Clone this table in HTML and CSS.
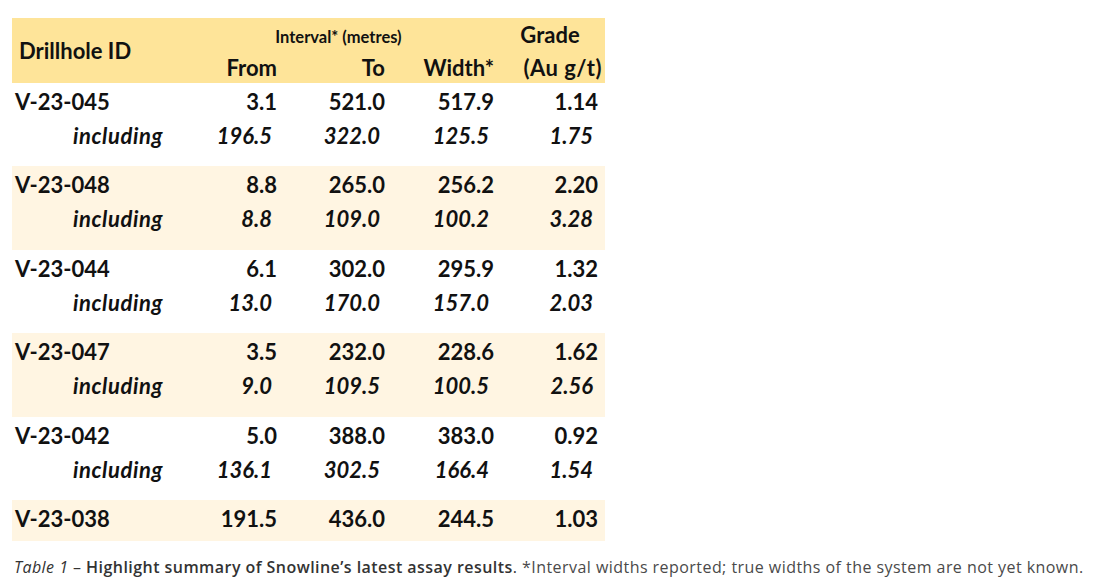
FILE: index.html
```html
<!DOCTYPE html>
<html lang="en">
<head>
<meta charset="utf-8">
<title>Assay results</title>
<link rel="stylesheet" href="styles.css">
</head>
<body>
<div class="page">
  <div class="table">
    <div class="head">
      <div class="h-id">Drillhole ID</div>
      <div class="h-interval">Interval* (metres)</div>
      <div class="h-grade">Grade</div>
      <div class="h-col">From</div>
      <div class="h-col">To</div>
      <div class="h-col">Width*</div>
      <div class="h-col h-unit">(Au g/t)</div>
    </div>

    <div class="group">
      <div class="id">V-23-045</div><div class="num">3.1</div><div class="num">521.0</div><div class="num">517.9</div><div class="num">1.14</div>
      <div class="inc">including</div><div class="num it">196.5</div><div class="num it">322.0</div><div class="num it">125.5</div><div class="num it">1.75</div>
    </div>
    <div class="group alt">
      <div class="id">V-23-048</div><div class="num">8.8</div><div class="num">265.0</div><div class="num">256.2</div><div class="num">2.20</div>
      <div class="inc">including</div><div class="num it">8.8</div><div class="num it">109.0</div><div class="num it">100.2</div><div class="num it">3.28</div>
    </div>
    <div class="group">
      <div class="id">V-23-044</div><div class="num">6.1</div><div class="num">302.0</div><div class="num">295.9</div><div class="num">1.32</div>
      <div class="inc">including</div><div class="num it">13.0</div><div class="num it">170.0</div><div class="num it">157.0</div><div class="num it">2.03</div>
    </div>
    <div class="group alt">
      <div class="id">V-23-047</div><div class="num">3.5</div><div class="num">232.0</div><div class="num">228.6</div><div class="num">1.62</div>
      <div class="inc">including</div><div class="num it">9.0</div><div class="num it">109.5</div><div class="num it">100.5</div><div class="num it">2.56</div>
    </div>
    <div class="group">
      <div class="id">V-23-042</div><div class="num">5.0</div><div class="num">388.0</div><div class="num">383.0</div><div class="num">0.92</div>
      <div class="inc">including</div><div class="num it">136.1</div><div class="num it">302.5</div><div class="num it">166.4</div><div class="num it">1.54</div>
    </div>
    <div class="group alt last">
      <div class="id">V-23-038</div><div class="num">191.5</div><div class="num">436.0</div><div class="num">244.5</div><div class="num">1.03</div>
    </div>
  </div>

  <p class="caption"><em>Table 1</em> – <strong>Highlight summary of Snowline’s latest assay results</strong>. <span class="note">*Interval widths reported; true widths of the system are not yet known.</span></p>
</div>
</body>
</html>
```

FILE: styles.css
```css
html, body {
  margin: 0;
  padding: 0;
  background: #ffffff;
}

.page {
  padding: 18px 0 0 12px;
}

.table {
  width: 593px;
  font-family: Lato, "Liberation Sans", sans-serif;
  font-weight: 700;
  font-size: 22px;
  color: #111111;
}

.head,
.group {
  display: grid;
  grid-template-columns: 168px 97px 108px 109px 104px;
  padding-right: 7px;
}

.head {
  background: #fee499;
  height: 65px;
  box-sizing: border-box;
  padding-top: 1px;
  grid-template-rows: 34px 30px;
}

.h-id {
  grid-column: 1;
  grid-row: 1 / span 2;
  align-self: center;
  padding-left: 7px;
  line-height: 30px;
}

.h-interval {
  grid-column: 2 / span 3;
  grid-row: 1;
  text-align: center;
  font-size: 16.5px;
  line-height: 36px;
  padding-left: 3px;
}

.h-grade {
  grid-column: 5;
  grid-row: 1;
  text-align: center;
  line-height: 32px;
  padding-left: 8px;
}

.h-col {
  grid-row: 2;
  text-align: right;
  line-height: 30px;
}

.h-unit {
  margin-right: -4px;
  letter-spacing: 0.5px;
}

.group {
  grid-auto-rows: 34px;
  padding-top: 2px;
  padding-bottom: 13.4px;
  line-height: 34px;
}

.group.alt {
  background: #fff5e2;
}

.group.last {
  padding-bottom: 5px;
}

.id {
  padding-left: 3px;
}

.inc {
  font-style: italic;
  padding-left: 61px;
  letter-spacing: 0.6px;
}

.num {
  text-align: right;
}

.num.it {
  font-style: italic;
  padding-right: 5px;
}

.caption {
  margin: 15px 0 0 2px;
  font-family: "Open Sans", "DejaVu Sans", sans-serif;
  font-size: 16px;
  letter-spacing: 0.45px;
  color: #333333;
  white-space: nowrap;
}

.caption em {
  font-style: italic;
}

.caption strong {
  font-weight: 600;
}

.caption .note {
  color: #4a4a4a;
}
```
